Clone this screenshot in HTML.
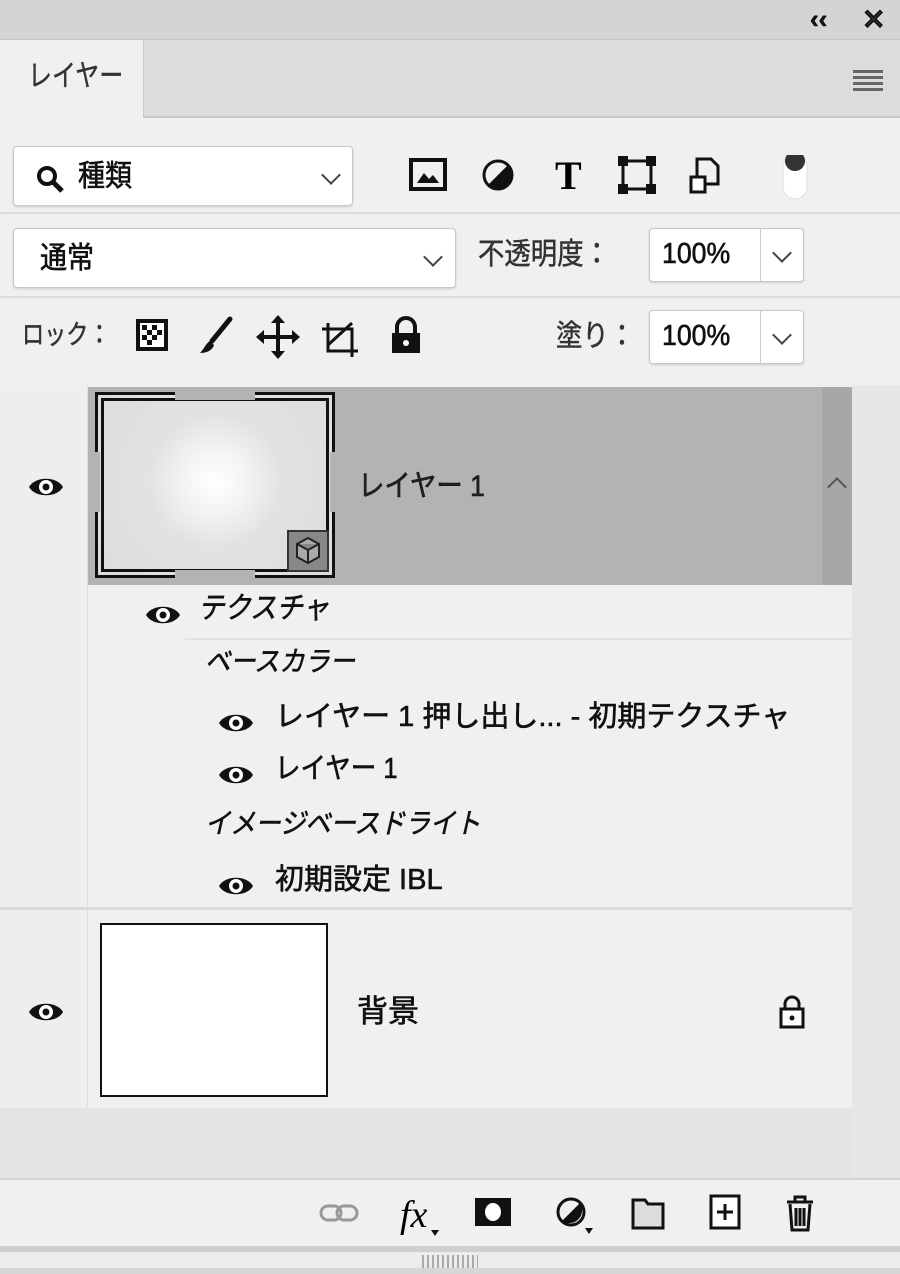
<!DOCTYPE html>
<html><head><meta charset="utf-8"><style>
*{margin:0;padding:0;box-sizing:border-box}
body{width:900px;height:1274px;background:#f0f0f0;position:relative;overflow:hidden;font-family:"Liberation Sans","Noto Sans CJK JP",sans-serif;color:#111}
.a{position:absolute}
.t{font-size:29px;white-space:nowrap;line-height:1;-webkit-text-stroke:0.6px #111;transform-origin:0 0}
.box{background:#fff;border:1px solid #c8c8c8;border-radius:4px;box-shadow:0 1px 2px rgba(0,0,0,.15)}
.chev{width:14px;height:14px;border-right:2px solid #444;border-bottom:2px solid #444;transform:rotate(45deg)}
</style></head><body>
<div class="a" style="left:0;top:0;width:900px;height:40px;background:#d4d4d4;border-bottom:1px solid #c4c4c4"></div>
<div class="a t" style="left:810px;top:6px;font-size:26px;font-weight:bold">‹‹</div>
<div class="a t" style="left:862px;top:6px;font-size:28px;font-weight:bold;color:#333">✕</div>
<div class="a" style="left:143px;top:40px;width:757px;height:78px;background:#dcdcdc;border-bottom:2px solid #c8c8c8;border-left:1px solid #c8c8c8"></div>
<div class="a t" style="left:28px;top:62px;font-size:30px;color:#333;-webkit-text-stroke:0.4px #333;transform:scaleX(.8)">レイヤー</div>
<div class="a" style="left:853px;top:70px;width:30px;height:3px;background:#666;box-shadow:0 6px 0 #666,0 12px 0 #666,0 18px 0 #666"></div>
<div class="a box" style="left:13px;top:146px;width:340px;height:60px"></div>
<svg class="a" style="left:36px;top:165px" width="30" height="30" viewBox="0 0 30 30"><circle cx="11" cy="11" r="8" fill="none" stroke="#111" stroke-width="4"/><path d="M17 17l9 9" stroke="#111" stroke-width="5"/></svg>
<div class="a t" style="left:78px;top:162px;font-size:30px;transform:scaleX(.9)">種類</div>
<div class="a chev" style="left:324px;top:168px"></div>
<svg class="a" style="left:405px;top:155px" width="410" height="50" viewBox="0 0 410 50">
<rect x="6" y="5" width="34" height="29" fill="none" stroke="#111" stroke-width="4"/><path d="M12 28l7-10 5 6 4-4 6 8z" fill="#111"/>
<circle cx="93" cy="20" r="14" fill="none" stroke="#111" stroke-width="3"/><path d="M83 30A14 14 0 0 0 103 10z" fill="#111"/>
<text x="150" y="34" font-family="Liberation Serif" font-weight="bold" font-size="40">T</text>
<rect x="218" y="6" width="28" height="28" fill="none" stroke="#111" stroke-width="3"/><g fill="#111"><rect x="213" y="1" width="10" height="10"/><rect x="241" y="1" width="10" height="10"/><rect x="213" y="29" width="10" height="10"/><rect x="241" y="29" width="10" height="10"/></g>
<path d="M292 4h14l7 7v18h-21z" fill="none" stroke="#111" stroke-width="3"/><rect x="286" y="22" width="14" height="15" fill="#fff" stroke="#111" stroke-width="3"/>
<rect x="378" y="0" width="24" height="44" rx="12" fill="#fff" stroke="#ddd"/><circle cx="390" cy="6" r="10" fill="#333"/>
</svg>
<div class="a" style="left:0;top:212px;width:900px;height:2px;background:#dcdcdc"></div>
<div class="a box" style="left:13px;top:228px;width:443px;height:60px"></div>
<div class="a t" style="left:40px;top:244px;font-size:30px;transform:scaleX(.9)">通常</div>
<div class="a chev" style="left:426px;top:250px"></div>
<div class="a t" style="left:478px;top:240px;font-size:30px;color:#333;-webkit-text-stroke:0.5px #333;transform:scaleX(.88)">不透明度：</div>
<div class="a box" style="left:649px;top:228px;width:155px;height:54px"></div>
<div class="a" style="left:760px;top:228px;width:1px;height:54px;background:#ccc"></div>
<div class="a t" style="left:662px;top:240px;font-size:29px;transform:scaleX(.92)">100%</div>
<div class="a chev" style="left:775px;top:246px"></div>
<div class="a" style="left:0;top:296px;width:900px;height:2px;background:#dcdcdc"></div>
<div class="a t" style="left:22px;top:322px;font-size:27px;color:#333;-webkit-text-stroke:0.5px #333;transform:scaleX(.82)">ロック：</div>
<svg class="a" style="left:130px;top:315px" width="300" height="50" viewBox="0 0 300 50">
<rect x="8" y="6" width="28" height="28" fill="#fff" stroke="#111" stroke-width="4"/><g fill="#111"><rect x="12" y="10" width="5" height="5"/><rect x="22" y="10" width="5" height="5"/><rect x="17" y="15" width="5" height="5"/><rect x="27" y="15" width="5" height="5"/><rect x="12" y="20" width="5" height="5"/><rect x="22" y="20" width="5" height="5"/><rect x="17" y="25" width="5" height="5"/></g>
<path d="M100 4L82 26" stroke="#111" stroke-width="5" stroke-linecap="round"/><path d="M80 26c-4 2-6 8-10 12 6 0 12-2 14-8z" fill="#111"/>
<path d="M148 4v36M130 22h36" stroke="#111" stroke-width="4"/><path d="M148 0l-7 8h14zM148 44l-7-8h14zM126 22l8-7v14zM170 22l-8-7v14z" fill="#111"/>
<path d="M198 8v28h30M192 14h30v28M222 8l-24 22" fill="none" stroke="#111" stroke-width="3"/>
<rect x="262" y="18" width="28" height="20" fill="#111"/><path d="M267 18v-6a9 9 0 0 1 18 0v6" fill="none" stroke="#111" stroke-width="4"/><circle cx="276" cy="28" r="3" fill="#fff"/>
</svg>
<div class="a t" style="left:556px;top:322px;font-size:30px;color:#333;-webkit-text-stroke:0.5px #333;transform:scaleX(.88)">塗り：</div>
<div class="a box" style="left:649px;top:310px;width:155px;height:54px"></div>
<div class="a" style="left:760px;top:310px;width:1px;height:54px;background:#ccc"></div>
<div class="a t" style="left:662px;top:322px;font-size:29px;transform:scaleX(.92)">100%</div>
<div class="a chev" style="left:775px;top:328px"></div>
<div class="a" style="left:852px;top:385px;width:48px;height:795px;background:#e6e6e6"></div>
<div class="a" style="left:0;top:385px;width:88px;height:725px;background:#eeeeee;border-right:1px solid #e0e0e0"></div>
<div class="a" style="left:88px;top:387px;width:764px;height:198px;background:#b3b3b3"></div>
<div class="a" style="left:822px;top:387px;width:30px;height:198px;background:#a7a7a7"></div>
<div class="a" style="left:95px;top:392px;width:240px;height:186px;border:3px solid #111;background:radial-gradient(circle at 50% 48%,#fff 0,#f4f4f4 20%,#e2e2e2 45%,#dcdcdc 100%)"></div>
<div class="a" style="left:101px;top:398px;width:228px;height:174px;border:3px solid #111;background:transparent"></div>
<div class="a" style="left:175px;top:390px;width:80px;height:10px;background:#b3b3b3"></div>
<div class="a" style="left:175px;top:570px;width:80px;height:10px;background:#b3b3b3"></div>
<div class="a" style="left:90px;top:452px;width:10px;height:60px;background:#b3b3b3"></div>
<div class="a" style="left:330px;top:452px;width:10px;height:60px;background:#b3b3b3"></div>
<svg class="a" style="left:287px;top:530px" width="42" height="42" viewBox="0 0 42 42"><rect x="1" y="1" width="40" height="40" fill="#888" stroke="#333" stroke-width="2"/><path d="M21 8l11 6v13l-11 6-11-6V14z M10 14l11 6 11-6 M21 20v13" fill="#aaa" stroke="#222" stroke-width="2"/></svg>
<div class="a t" style="left:358px;top:472px;font-size:30px;color:#222;transform:scaleX(.88)">レイヤー 1</div>
<div class="a" style="left:830px;top:480px;width:14px;height:14px;border-left:2px solid #555;border-top:2px solid #555;transform:rotate(45deg)"></div>
<svg width="0" height="0" style="position:absolute"><defs><g id="eye"><path d="M2 13C8 2 30 2 36 13C30 24 8 24 2 13z" fill="#111"/><circle cx="19" cy="13" r="7" fill="#fff"/><circle cx="19" cy="13" r="3.5" fill="#111"/></g></defs></svg>
<svg class="a" style="left:27px;top:474px" width="38" height="26"><use href="#eye"/></svg>
<svg class="a" style="left:144px;top:602px" width="38" height="26"><use href="#eye"/></svg>
<svg class="a" style="left:217px;top:710px" width="38" height="26"><use href="#eye"/></svg>
<svg class="a" style="left:217px;top:762px" width="38" height="26"><use href="#eye"/></svg>
<svg class="a" style="left:217px;top:873px" width="38" height="26"><use href="#eye"/></svg>
<svg class="a" style="left:27px;top:999px" width="38" height="26"><use href="#eye"/></svg>
<div class="a t" style="left:198px;top:594px;font-size:30px;font-style:italic;transform:scaleX(.88)">テクスチャ</div>
<div class="a" style="left:185px;top:638px;width:667px;height:2px;background:#e2e2e2"></div>
<div class="a t" style="left:205px;top:648px;font-size:28px;font-style:italic;transform:scaleX(.9)">ベースカラー</div>
<div class="a t" style="left:275px;top:703px;font-size:29px;transform:scaleX(1.0)">レイヤー 1 押し出し... - 初期テクスチャ</div>
<div class="a t" style="left:275px;top:755px;font-size:29px;transform:scaleX(.88)">レイヤー 1</div>
<div class="a t" style="left:205px;top:810px;font-size:28px;font-style:italic;transform:scaleX(.9)">イメージベースドライト</div>
<div class="a t" style="left:275px;top:866px;font-size:29px">初期設定 IBL</div>
<div class="a" style="left:0;top:907px;width:852px;height:3px;background:#dadada"></div>
<div class="a" style="left:100px;top:923px;width:228px;height:174px;background:#fff;border:2px solid #111"></div>
<div class="a t" style="left:357px;top:996px;font-size:31px">背景</div>
<svg class="a" style="left:776px;top:995px" width="32" height="36" viewBox="0 0 32 36"><path d="M9 14V9a7 7 0 0 1 14 0v5" fill="none" stroke="#111" stroke-width="3"/><rect x="5" y="14" width="22" height="18" fill="#fff" stroke="#111" stroke-width="3"/><circle cx="16" cy="23" r="2.5" fill="#111"/></svg>
<div class="a" style="left:0;top:1108px;width:852px;height:72px;background:#e4e4e4"></div>
<div class="a" style="left:0;top:1178px;width:900px;height:2px;background:#d2d2d2"></div>
<svg class="a" style="left:315px;top:1192px" width="510" height="50" viewBox="0 0 510 50">
<g fill="none" stroke="#999" stroke-width="3"><rect x="6" y="14" width="20" height="14" rx="7"/><rect x="22" y="14" width="20" height="14" rx="7"/></g>
<text x="85" y="35" font-family="Liberation Serif" font-style="italic" font-size="38">fx</text><path d="M116 38h8l-4 6z" fill="#111"/>
<rect x="160" y="6" width="36" height="28" fill="#111"/><ellipse cx="178" cy="20" rx="8" ry="9" fill="#fff"/>
<circle cx="256" cy="20" r="13" fill="none" stroke="#111" stroke-width="3"/><path d="M247 29A13 13 0 0 0 265 11z" fill="#111"/><path d="M270 36h8l-4 6z" fill="#111"/>
<path d="M318 8h12l3 4h15v24h-30z" fill="#ddd" stroke="#111" stroke-width="3"/>
<rect x="396" y="4" width="28" height="32" fill="#fff" stroke="#111" stroke-width="3"/><path d="M410 12v16M402 20h16" stroke="#111" stroke-width="3"/>
<path d="M472 10h26M480 10V5h10v5M475 12l2 26h16l2-26M481 16v18M485 16v18M489 16v18" fill="none" stroke="#111" stroke-width="3"/>
</svg>
<div class="a" style="left:0;top:1246px;width:900px;height:6px;background:#cfcfcf"></div>
<div class="a" style="left:0;top:1252px;width:900px;height:22px;background:#ececec"></div>
<div class="a" style="left:422px;top:1255px;width:56px;height:14px;background:repeating-linear-gradient(90deg,#aaa 0 2px,transparent 2px 5px)"></div>
<div class="a" style="left:0;top:1268px;width:900px;height:6px;background:#d6d6d6"></div>
</body></html>
